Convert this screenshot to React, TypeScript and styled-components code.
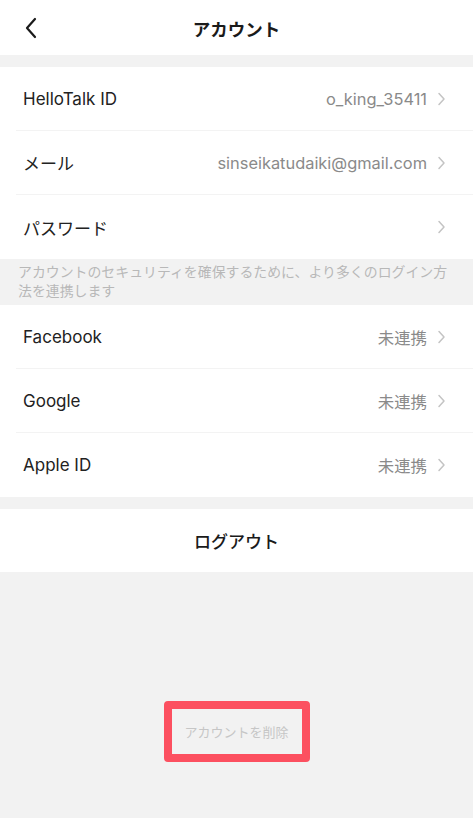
import styled, { createGlobalStyle } from "styled-components"

const Global = createGlobalStyle`
  html, body {
    margin: 0;
    padding: 0;
    background: #f2f2f2;
  }
  body {
    font-family: Inter, "Noto Sans CJK JP", sans-serif;
    -webkit-font-smoothing: antialiased;
  }
`

const Page = styled.div`
  width: 473px;
  min-height: 818px;
  background: #f2f2f2;
  display: flex;
  flex-direction: column;
`

const NavBar = styled.header`
  height: 55px;
  background: #fff;
  display: grid;
  grid-template-columns: 60px 1fr 60px;
  align-items: center;

  h1 {
    margin: 0;
    text-align: center;
    font-size: 17.5px;
    font-weight: 700;
    color: #1a1a1a;
    font-family: "Noto Sans CJK JP", sans-serif;
    padding-top: 2px;
  }
`

const BackButton = styled.button`
  border: 0;
  background: none;
  padding: 0 0 0 24px;
  height: 55px;
  display: flex;
  align-items: center;
`

const Group = styled.section<{ $top?: number }>`
  margin-top: ${p => p.$top ?? 0}px;
  background: #fff;
`

const Row = styled.div<{ $last?: boolean }>`
  height: 64px;
  margin-left: 16px;
  padding: 0 27px 0 7px;
  display: flex;
  align-items: center;
  gap: 10px;
  border-bottom: ${p => (p.$last ? "none" : "1px solid #f3f3f3")};
  box-sizing: border-box;

  .label {
    flex: 1;
    font-size: 17px;
    color: #222;
  }

  .value {
    font-size: 16.4px;
    color: #8a8a8a;
  }
`

const Note = styled.p`
  margin: 0;
  padding: 3px 18px 5px;
  font-size: 13.9px;
  line-height: 19px;
  color: #b8b8b8;
  font-family: "Noto Sans CJK JP", sans-serif;
`

const Logout = styled.button`
  width: 100%;
  height: 63px;
  border: 0;
  background: #fff;
  font-family: "Noto Sans CJK JP", sans-serif;
  font-size: 17px;
  font-weight: 500;
  color: #1a1a1a;
`

const Bottom = styled.div`
  display: flex;
  justify-content: center;
  padding-top: 129px;
`

const Highlight = styled.div`
  border: 8.5px solid #fc5060;
  border-radius: 4px;
  width: 146px;
  height: 61px;
  box-sizing: border-box;
  display: grid;
  place-items: center;
`

const DeleteButton = styled.button`
  border: 0;
  background: none;
  font-family: "Noto Sans CJK JP", sans-serif;
  font-size: 13px;
  color: #c6c6c6;
  padding: 0;
`

const Chevron = () => (
  <svg width="9" height="14" viewBox="0 0 9 14">
    <path d="M2 1.5 7 7l-5 5.5" fill="none" stroke="#c4c4c4" strokeWidth="1.5" strokeLinecap="round" strokeLinejoin="round" />
  </svg>
)

const BackIcon = () => (
  <svg width="14" height="22" viewBox="0 0 14 22">
    <path d="M11 2 3 11l8 9" fill="none" stroke="#1a1a1a" strokeWidth="2.2" strokeLinecap="round" strokeLinejoin="round" />
  </svg>
)

interface Item {
  label: string
  value?: string
}

const accountItems: Item[] = [
  { label: "HelloTalk ID", value: "o_king_35411" },
  { label: "メール", value: "sinseikatudaiki@gmail.com" },
  { label: "パスワード" },
]

const linkItems: Item[] = [
  { label: "Facebook", value: "未連携" },
  { label: "Google", value: "未連携" },
  { label: "Apple ID", value: "未連携" },
]

const renderRows = (items: Item[]) =>
  items.map((it, i) => (
    <Row key={it.label} $last={i === items.length - 1}>
      <span className="label">{it.label}</span>
      {it.value && <span className="value">{it.value}</span>}
      <Chevron />
    </Row>
  ))

export default function App() {
  return (
    <Page>
      <Global />
      <NavBar>
        <BackButton><BackIcon /></BackButton>
        <h1>アカウント</h1>
        <span />
      </NavBar>

      <Group $top={12}>{renderRows(accountItems)}</Group>

      <Note>アカウントのセキュリティを確保するために、より多くのログイン方法を連携します</Note>

      <Group>{renderRows(linkItems)}</Group>

      <Group $top={12}>
        <Logout>ログアウト</Logout>
      </Group>

      <Bottom>
        <Highlight>
          <DeleteButton>アカウントを削除</DeleteButton>
        </Highlight>
      </Bottom>
    </Page>
  )
}
